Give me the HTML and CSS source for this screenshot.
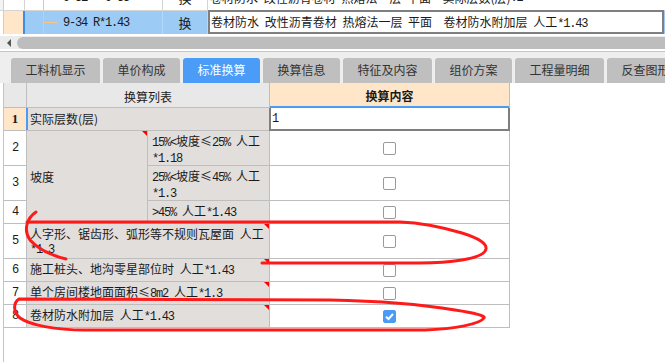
FILE: index.html
```html
<!DOCTYPE html>
<html lang="zh-CN">
<head>
    <meta charset="UTF-8">
    <meta name="viewport" content="width=device-width, initial-scale=1.0">
    <title>标准换算</title>
    <link rel="stylesheet" href="styles.css">
</head>
<body>
    <!-- 上方子目列表 -->
    <div class="sub-grid">
        <div class="srow srow-prev">
            <div class="scell s-gut"></div>
            <div class="scell s-num"></div>
            <div class="scell s-code"><span class="tree"></span><span class="m">9-31 ~ 9-33</span></div>
            <div class="scell s-type">换</div>
            <div class="scell s-desc">卷材防水 改性沥青卷材 热熔法一层 平面&nbsp; 实际层数(层)<span class="m">:2</span></div>
        </div>
        <div class="srow srow-cur">
            <div class="scell s-gut"></div>
            <div class="scell s-num"></div>
            <div class="scell s-code"><span class="tree"><span class="branch"></span></span><span class="m">9-34 R*1.43</span></div>
            <div class="scell s-type">换</div>
            <div class="scell s-desc">
                <div class="edit">卷材防水 改性沥青卷材 热熔法一层 平面&nbsp; 卷材防水附加层 人工<span class="m">*1.43</span></div>
            </div>
        </div>
    </div>

    <div class="hscroll">
        <span class="arrow"></span>
        <span class="thumb"></span>
    </div>

    <!-- 页签 -->
    <div class="tabbar">
        <div class="tab">工料机显示</div>
        <div class="tab">单价构成</div>
        <div class="tab active">标准换算</div>
        <div class="tab">换算信息</div>
        <div class="tab">特征及内容</div>
        <div class="tab">组价方案</div>
        <div class="tab">工程量明细</div>
        <div class="tab">反查图形工程量</div>
    </div>

    <!-- 换算表 -->
    <div class="table-wrap">
        <div class="grid">
            <div class="cell head"></div>
            <div class="cell head h-list">换算列表</div>
            <div class="cell head h-content">换算内容</div>

            <div class="cell num num-cur">1</div>
            <div class="cell desc wide desc-cur">实际层数(层)</div>
            <div class="cell edit-cell"><span class="m">1</span></div>

            <div class="cell num m">2</div>
            <div class="cell desc tall flag">坡度</div>
            <div class="cell desc sub two-line"><span><span class="m">15%&lt;</span>坡度≤<span class="m">25% </span>人工<br><span class="m">*1.18</span></span></div>
            <div class="cell check"><span class="cb"></span></div>

            <div class="cell num m">3</div>
            <div class="cell desc sub two-line"><span><span class="m">25%&lt;</span>坡度≤<span class="m">45% </span>人工<br><span class="m">*1.3</span></span></div>
            <div class="cell check"><span class="cb"></span></div>

            <div class="cell num m">4</div>
            <div class="cell desc sub"><span><span class="m">&gt;45% </span>人工<span class="m">*1.43</span></span></div>
            <div class="cell check"><span class="cb"></span></div>

            <div class="cell num m">5</div>
            <div class="cell desc wide two-line flag"><span>人字形、锯齿形、弧形等不规则瓦屋面 人工<br><span class="m">*1.3</span></span></div>
            <div class="cell check"><span class="cb"></span></div>

            <div class="cell num m">6</div>
            <div class="cell desc wide flag"><span>施工桩头、地沟零星部位时 人工<span class="m">*1.43</span></span></div>
            <div class="cell check"><span class="cb"></span></div>

            <div class="cell num m">7</div>
            <div class="cell desc wide flag"><span>单个房间楼地面面积≤<span class="m">8m2 </span>人工<span class="m">*1.3</span></span></div>
            <div class="cell check"><span class="cb"></span></div>

            <div class="cell num m">8</div>
            <div class="cell desc wide flag"><span>卷材防水附加层 人工<span class="m">*1.43</span></span></div>
            <div class="cell check">
                <span class="cb checked">
                    <svg width="11" height="11" viewBox="0 0 11 11"><polyline points="2,5.8 4.5,8 9,3" fill="none" stroke="#fff" stroke-width="2"/></svg>
                </span>
            </div>
        </div>
    </div>

    <!-- 红色圈注 -->
    <svg class="ink" width="665" height="362" viewBox="0 0 665 362">
        <path d="M36 212 C27 218, 23 230, 30 240 C38 249, 50 255, 66 259"/>
        <path d="M27 222 L400 222 C425 223, 445 228, 462 233 C478 238, 487 243, 486 249 C485 255, 474 258, 462 260 C450 262, 440 263, 420 263 L262 263"/>
        <path d="M19 299 L330 300 C380 301, 425 305, 455 310 C475 313, 486 316, 484 318 C480 324, 455 329, 425 330 L85 330 C55 330, 30 325, 20 318 C13 312, 13 303, 19 299 Z"/>
    </svg>
</body>
</html>
```

FILE: styles.css
```css
* {
    box-sizing: border-box;
    margin: 0;
    padding: 0;
}

html, body {
    width: 100%;
    height: 100%;
    overflow: hidden;
    background-color: #ffffff;
}

body {
    position: relative;
    font-family: "Noto Sans CJK SC", sans-serif;
    font-size: 12px;
    word-spacing: 3px;
    color: #1a1a1a;
}

.m {
    font-family: "Liberation Mono", "DejaVu Sans Mono", monospace;
    font-size: 12px;
    letter-spacing: -1.2px;
    word-spacing: 0;
}

/* 子目列表 */
.srow {
    display: flex;
    white-space: nowrap;
}

.srow-prev {
    height: 11px;
    border-bottom: 1px solid #d4d4d4;
    overflow: hidden;
}

.srow-prev .scell {
    height: 24px;
    margin-top: -14px;
}

.srow-cur {
    height: 23px;
    background-color: #9ccbf6;
}

.scell {
    display: flex;
    align-items: center;
    line-height: 20px;
}

.s-gut {
    width: 4px;
    background-color: #f3f3f3;
    border-right: 1px solid #cfcfcf;
}

.srow-cur .s-gut {
    background-color: #ffffff;
}

.s-num {
    width: 21px;
    border-right: 1px solid #d4d4d4;
}

.srow-cur .s-num {
    background-color: #ffe6c8;
    border-right: 2px solid #3b8de8;
}

.s-code {
    width: 138px;
    padding-left: 18px;
    border-right: 1px solid #d4d4d4;
}

.srow-cur .s-code,
.srow-cur .s-type {
    border-right-color: #b4d8f8;
}

.tree {
    align-self: stretch;
    width: 15px;
    margin-right: 5px;
    border-left: 1px solid #f3c58a;
    display: flex;
    align-items: center;
}

.srow-cur .tree {
    margin-bottom: 1px;
}

.branch {
    width: 14px;
    height: 1px;
    background-color: #f3c58a;
}

.s-type {
    width: 45px;
    justify-content: center;
    font-size: 13px;
    border-right: 1px solid #d4d4d4;
}

.s-desc {
    flex: 1;
    padding-left: 2px;
}

.srow-cur .s-desc {
    padding-left: 0;
    align-items: flex-start;
}

.edit {
    width: 456px;
    height: 24px;
    margin-top: -1px;
    padding-left: 1px;
    border: 2px solid #7f7f7f;
    background-color: #ffffff;
    line-height: 20px;
    overflow: hidden;
}

/* 滚动条 */
.hscroll {
    display: flex;
    align-items: center;
    height: 13px;
    margin-top: 2px;
    background-color: #ececec;
}

.arrow {
    width: 0;
    height: 0;
    margin-left: 7px;
    border-top: 4px solid transparent;
    border-bottom: 4px solid transparent;
    border-right: 4px solid #555555;
}

.thumb {
    flex: 1;
    height: 12px;
    margin-left: 6px;
    background-color: #bdbdbd;
    border-radius: 6px 0 0 6px;
}

/* 页签 */
.tabbar {
    display: flex;
    gap: 3px;
    height: 32px;
    margin-top: 2px;
    padding: 6px 0 0 11px;
    border-top: 1px solid #c6c6c6;
    background-color: #eeeeee;
    overflow: hidden;
    word-spacing: 0;
}

.tab {
    flex: none;
    height: 25px;
    padding: 0 14.5px;
    line-height: 24px;
    color: #333333;
    background-color: #bfbfbf;
    border-radius: 3px 3px 0 0;
    white-space: nowrap;
}

.tab.active {
    color: #ffffff;
    background-color: #4a9cf6;
}

/* 换算表 */
.table-wrap {
    height: 279px;
    margin-left: 3px;
    border-left: 1px solid #c4c4c4;
}

.grid {
    display: grid;
    grid-template-columns: 22px 120px 121px 239px;
    grid-template-rows: 24px 22px 34px 34px 22px 34px 22px 22px 22px;
    gap: 1px;
    width: max-content;
    background-color: #bebebe;
    border-right: 1px solid #bebebe;
    border-bottom: 1px solid #bebebe;
}

.cell {
    display: flex;
    align-items: center;
    background-color: #ffffff;
    line-height: 14px;
    white-space: nowrap;
}

.head {
    justify-content: center;
    padding-top: 3px;
    background-color: #e8e8e8;
}

.h-list {
    grid-column: span 2;
}

.h-content {
    margin-bottom: -1px;
    background-color: #ffe6c8;
    border-bottom: 2px solid #4a9bf5;
    font-weight: bold;
}

.num {
    justify-content: center;
}

.num-cur {
    background-color: #ffe6c8;
    font-family: "Liberation Serif", serif;
    font-weight: bold;
    font-size: 13px;
}

.desc {
    padding-left: 3px;
    background-color: #e2dedc;
}

.wide {
    grid-column: span 2;
}

.tall {
    grid-row: span 3;
}

.sub {
    padding-left: 4px;
}

.two-line {
    align-items: flex-start;
    padding-top: 3px;
}

.desc-cur {
    margin-left: -1px;
    padding-left: 2px;
    border-left: 2px solid #4a9bf5;
}

.edit-cell {
    margin: 0 -1px -1px -1px;
    padding-left: 1px;
    border: 2px solid #7f7f7f;
    border-top: none;
}

.flag {
    position: relative;
}

.flag::after {
    content: "";
    position: absolute;
    top: 0;
    right: 0;
    border-top: 5px solid #ff0000;
    border-left: 5px solid transparent;
}

.check {
    justify-content: center;
}

.cb {
    display: flex;
    align-items: center;
    justify-content: center;
    width: 13px;
    height: 13px;
    border: 1px solid #9a9a9a;
    border-radius: 2px;
    background-color: #ffffff;
}

.cb.checked {
    border-color: #4a9bf5;
    background-color: #4a9bf5;
}

.ink {
    position: absolute;
    top: 0;
    left: 0;
    pointer-events: none;
}

.ink path {
    fill: none;
    stroke: #ff1a1a;
    stroke-width: 3;
    stroke-linecap: round;
    stroke-linejoin: round;
}
```
